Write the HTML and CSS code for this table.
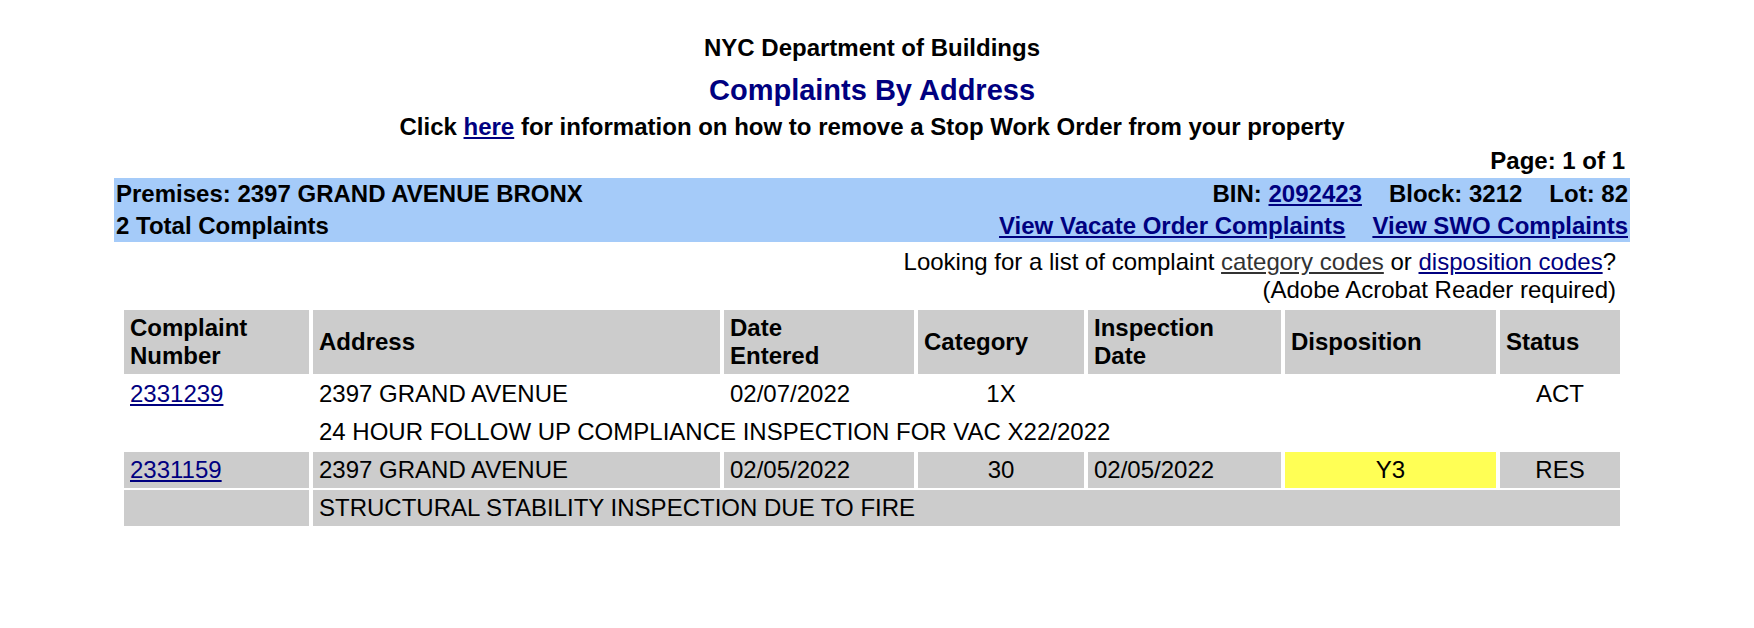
FILE: index.html
```html
<!DOCTYPE html>
<html>
<head>
<meta charset="utf-8">
<title>Complaints By Address</title>
<link rel="stylesheet" href="styles.css">
</head>
<body>
<div class="page">
  <div class="agency">NYC Department of Buildings</div>
  <div class="title">Complaints By Address</div>
  <div class="notice">Click <a href="#" class="lnk">here</a> for information on how to remove a Stop Work Order from your property</div>
  <div class="pager">Page: 1 of 1</div>
  <div class="premises">
    <div class="prem-row">
      <span>Premises: 2397 GRAND AVENUE BRONX</span>
      <span class="prem-right"><span>BIN: <a href="#" class="lnk">2092423</a></span><span>Block: 3212</span><span>Lot: 82</span></span>
    </div>
    <div class="prem-row">
      <span>2 Total Complaints</span>
      <span class="prem-right"><a href="#" class="lnk">View Vacate Order Complaints</a><a href="#" class="lnk">View SWO Complaints</a></span>
    </div>
  </div>
  <div class="codes">
    <div>Looking for a list of complaint <a href="#" class="lnk-gray">category codes</a> or <a href="#" class="lnk">disposition codes</a>?</div>
    <div>(Adobe Acrobat Reader required)</div>
  </div>
  <table class="complaints">
    <colgroup>
      <col class="c1"><col class="c2"><col class="c3"><col class="c4"><col class="c5"><col class="c6"><col class="c7">
    </colgroup>
    <thead>
      <tr>
        <th>Complaint<br>Number</th>
        <th>Address</th>
        <th>Date<br>Entered</th>
        <th>Category</th>
        <th>Inspection<br>Date</th>
        <th>Disposition</th>
        <th>Status</th>
      </tr>
    </thead>
    <tbody>
      <tr>
        <td><a href="#" class="lnk-plain">2331239</a></td>
        <td>2397 GRAND AVENUE</td>
        <td>02/07/2022</td>
        <td class="center">1X</td>
        <td></td>
        <td class="center"></td>
        <td class="center">ACT</td>
      </tr>
      <tr>
        <td></td>
        <td colspan="6">24 HOUR FOLLOW UP COMPLIANCE INSPECTION FOR VAC X22/2022</td>
      </tr>
      <tr class="shaded">
        <td><a href="#" class="lnk-plain">2331159</a></td>
        <td>2397 GRAND AVENUE</td>
        <td>02/05/2022</td>
        <td class="center">30</td>
        <td>02/05/2022</td>
        <td class="center yellow">Y3</td>
        <td class="center">RES</td>
      </tr>
      <tr class="shaded">
        <td></td>
        <td colspan="6">STRUCTURAL STABILITY INSPECTION DUE TO FIRE</td>
      </tr>
    </tbody>
  </table>
</div>
</body>
</html>
```
FILE: styles.css
```css
html, body {
  margin: 0;
  padding: 0;
  background: #ffffff;
}
body {
  font-family: "Liberation Sans", Arial, sans-serif;
  font-size: 24px;
  line-height: 28px;
  color: #000000;
}
.page {
  padding: 34px 124px 0 114px;
}
.agency {
  text-align: center;
  font-weight: bold;
}
.title {
  text-align: center;
  font-weight: bold;
  font-size: 29px;
  line-height: 34px;
  color: #000080;
  margin-top: 11px;
}
.notice {
  text-align: center;
  font-weight: bold;
  margin-top: 6px;
}
.lnk {
  color: #000080;
  text-decoration: underline;
}
.lnk-plain {
  color: #000080;
  text-decoration: underline;
  font-weight: normal;
}
.lnk-gray {
  color: #333333;
  text-decoration: underline;
}
.pager {
  text-align: right;
  font-weight: bold;
  margin-top: 6px;
  padding-right: 5px;
}
.premises {
  margin-top: 3px;
  background: #a5cbf9;
  font-weight: bold;
  padding: 0 2px;
}
.prem-row {
  display: flex;
  justify-content: space-between;
  padding: 2px 0;
}
.prem-right {
  display: flex;
  gap: 27px;
}
.codes {
  margin-top: 6px;
  text-align: right;
  padding-right: 14px;
}
.complaints {
  margin: 4px 0 0 6px;
  width: 1504px;
  table-layout: fixed;
  border-collapse: separate;
  border-spacing: 4px 2px;
}
.c1 { width: 185px; }
.c2 { width: 407px; }
.c3 { width: 190px; }
.c4 { width: 166px; }
.c5 { width: 193px; }
.c6 { width: 211px; }
.c7 { width: 120px; }
.complaints th {
  background: #cccccc;
  text-align: left;
  vertical-align: middle;
  font-weight: bold;
  padding: 4px 6px;
}
.complaints td {
  padding: 4px 6px;
  vertical-align: middle;
  white-space: nowrap;
}
.complaints .shaded td {
  background: #cccccc;
}
.complaints td.center {
  text-align: center;
}
.complaints .shaded td.yellow,
.complaints td.yellow {
  background: #ffff55;
}
```
